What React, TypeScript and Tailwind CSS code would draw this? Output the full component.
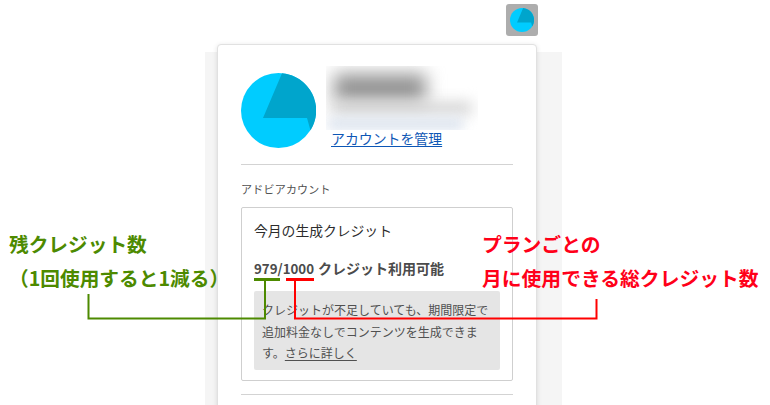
import React from 'react';

function Avatar({ size }: { size: number }) {
  return (
    <svg width={size} height={size} viewBox="0 0 75 75" className="block shrink-0">
      <circle cx="37.5" cy="37.5" r="37.5" fill="#00ccff" />
      <path d="M41 .2 L22 45 L66 45 L69.5 57.5 A37.5 37.5 0 0 0 41 .2 Z" fill="#00a5cc" />
    </svg>
  );
}

export default function App() {
  return (
    <div className="relative w-[770px] h-[405px] overflow-hidden bg-white font-['Noto_Sans_CJK_JP',sans-serif]">
      {/* header */}
      <div className="h-[52px] pt-1 pl-[506px]">
        <div className="flex h-8 w-8 items-center justify-center rounded-[3px] bg-[#adadad]">
          <Avatar size={24} />
        </div>
      </div>

      {/* page backdrop + account card */}
      <div className="ml-[205px] flex h-[353px] w-[357px] flex-col bg-[#f5f5f5] px-3">
        <div className="-mt-2 h-[370px] w-[320px] shrink-0 rounded-t-[4px] border border-[#e1e1e1] bg-white px-[23px] pt-[28px] shadow-[0_1px_5px_rgba(0,0,0,0.12)]">
          <div className="flex h-[92px] items-start border-b border-[#d3d3d3]">
            <Avatar size={75} />
            <div className="ml-[10px] -mt-[7px]">
              <div className="relative h-[64px] w-[152px] overflow-hidden">
                <div className="absolute left-[8px] top-[8px] h-[28px] w-[92px] bg-[#929292] blur-[9px]" />
                <div className="absolute left-[6px] top-[36px] h-[12px] w-[140px] bg-[#d2d2d2] blur-[7px]" />
                <div className="absolute left-[2px] top-[52px] h-[12px] w-[135px] bg-[#dbe3ee] blur-[6px]" />
              </div>
              <a className="ml-[5px] -mt-[2px] block w-fit text-[13.9px] leading-[20px] text-[#0d56b5] underline underline-offset-2">
                アカウントを管理
              </a>
            </div>
          </div>

          <div className="mt-[16px] text-[11px] leading-4 tracking-[0.02em] text-[#505050]">アドビアカウント</div>

          <div className="mt-[10px] h-[174px] rounded-[2px] border border-[#cfcfcf] px-3 pt-[12px]">
            <div className="text-[13.8px] leading-5 text-[#2c2c2c]">今月の生成クレジット</div>
            <div className="mt-[18px] flex items-baseline gap-[4px] text-[14px] font-bold leading-5 text-[#4b4b4b]">
              <span className="text-[13.3px]">979/1000</span>
              <span>クレジット利用可能</span>
            </div>
            <div className="mt-[12px] h-[79px] w-[246px] rounded-[2px] bg-[#e5e5e5] pl-2 pt-[8px] text-[12px] leading-[21.5px] text-[#505050]">
              <div>クレジットが不足していても、期間限定で</div>
              <div>追加料金なしでコンテンツを生成できま</div>
              <div>
                す。<span className="underline underline-offset-2">さらに詳しく</span>
              </div>
            </div>
          </div>

          <div className="mt-[13px] border-t border-[#d3d3d3]" />
        </div>
      </div>

      {/* green annotation */}
      <div className="absolute left-[9px] top-[227px] flex flex-col text-[19.7px] font-bold leading-[34px] text-[#4d8a00]">
        <span>残クレジット数</span>
        <span>（1回使用すると1減る）</span>
      </div>

      {/* red annotation */}
      <div className="absolute left-[482px] top-[227px] flex flex-col text-[19.8px] font-bold leading-[34px] text-[#ff0019]">
        <span>プランごとの</span>
        <span>月に使用できる総クレジット数</span>
      </div>

      {/* leader lines */}
      <svg width="770" height="405" className="pointer-events-none absolute inset-0" fill="none" strokeWidth="2">
        <path d="M254 279.5 H280" stroke="#4d8a00" strokeWidth="3" />
        <path d="M88.5 294 V318.5 H265 V280" stroke="#4d8a00" />
        <path d="M286 279.5 H314" stroke="#ff0000" strokeWidth="3" />
        <path d="M295 280 V318.5 H596.5 V299" stroke="#ff0000" />
      </svg>
    </div>
  );
}
